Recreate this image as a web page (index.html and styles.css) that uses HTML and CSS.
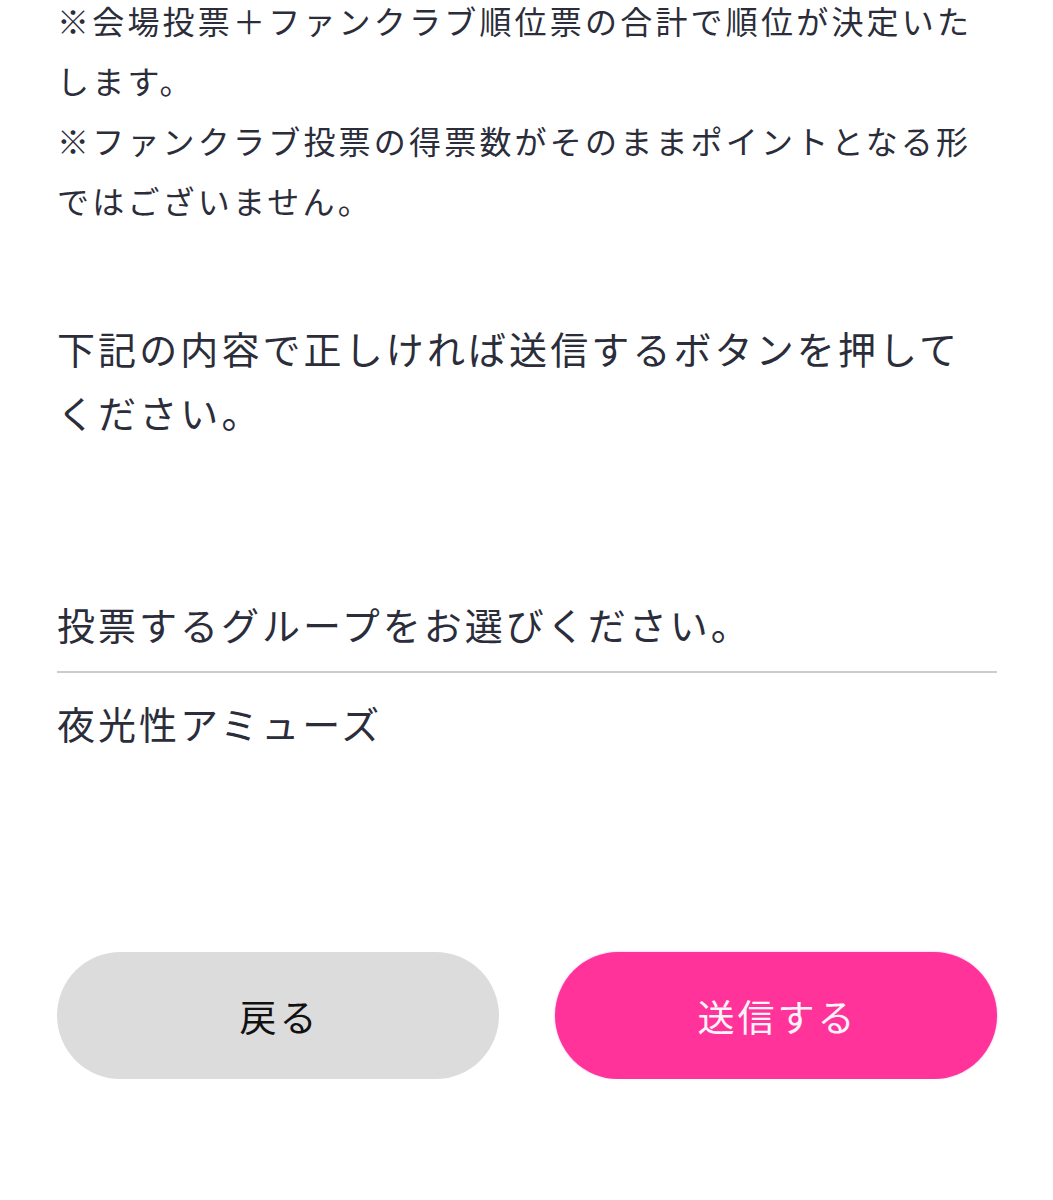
FILE: index.html
```html
<!DOCTYPE html>
<html lang="ja">
<head>
<meta charset="utf-8">
<title>投票確認</title>
<link rel="stylesheet" href="styles.css">
</head>
<body>
<main class="page">
  <p class="notes">※会場投票＋ファンクラブ順位票の合計で順位が決定いたします。<br>※ファンクラブ投票の得票数がそのままポイントとなる形ではございません。</p>
  <p class="lead">下記の内容で正しければ送信するボタンを押してください。</p>
  <section class="field">
    <div class="field-label">投票するグループをお選びください。</div>
    <div class="field-value">夜光性アミューズ</div>
  </section>
  <div class="actions">
    <button class="btn btn-back" type="button">戻る</button>
    <button class="btn btn-submit" type="button">送信する</button>
  </div>
</main>
</body>
</html>
```
FILE: styles.css
```css
html, body {
  margin: 0;
  padding: 0;
  background: #ffffff;
}
body {
  font-family: "Noto Sans CJK JP", "Noto Sans", sans-serif;
  color: #2b2d3a;
}
.page {
  padding: 0 56px 0 57px;
}
.notes {
  margin: -10px 0 0;
  font-size: 32px;
  line-height: 60px;
  letter-spacing: 3.2px;
}
.lead {
  margin: 86px 0 0;
  font-size: 38px;
  line-height: 64px;
  letter-spacing: 3.1px;
}
.field {
  margin-top: 148px;
  font-size: 38px;
  line-height: 64px;
  letter-spacing: 3px;
}
.field-label {
  padding-bottom: 15px;
  border-bottom: 2px solid #cccccc;
}
.field-value {
  margin-top: 18px;
}
.actions {
  margin-top: 197px;
  display: grid;
  grid-template-columns: 1fr 1fr;
  gap: 56px;
}
.btn {
  height: 127px;
  border: none;
  border-radius: 64px;
  font-family: "Noto Sans CJK JP", "Noto Sans", sans-serif;
  font-size: 37px;
  letter-spacing: 3px;
  padding: 0 0 0 3px;
  cursor: pointer;
}
.btn-back {
  background: #dcdcdc;
  color: #111111;
}
.btn-submit {
  background: #ff3399;
  color: #fff4fa;
  box-shadow: 0 0 2px rgba(200, 60, 200, 0.5);
}
```
